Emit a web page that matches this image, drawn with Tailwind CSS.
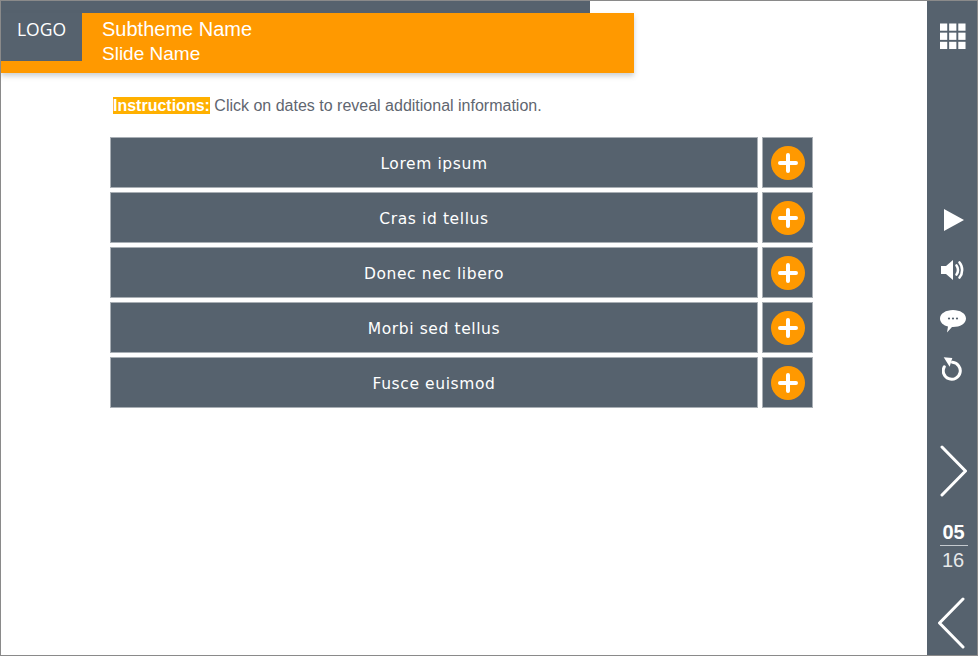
<!DOCTYPE html>
<html>
<head>
<meta charset="utf-8">
<script src="https://cdn.jsdelivr.net/npm/@tailwindcss/browser@4"></script>
</head>
<body class="m-0 bg-white">
<div class="flex h-[656px] w-[978px] overflow-hidden border border-[#8a8a8a] bg-white font-['Liberation_Sans',sans-serif]">
  <main class="flex min-w-0 flex-1 flex-col">
    <header class="flex w-[633px] flex-col">
      <div class="h-[12px] w-[589px] bg-[#56626e]"></div>
      <div class="flex h-[60px] bg-[#ff9900] shadow-[0_3px_5px_rgba(86,98,110,0.3)]">
        <div class="flex h-[48px] w-[81px] items-center justify-center self-start bg-[#56626e] pb-[15px] font-['Open_Sans',sans-serif] text-[17.5px] text-white">LOGO</div>
        <div class="flex flex-col pl-[20px] text-white">
          <div class="h-[29px] pt-[3px] text-[20px] leading-[26px]">Subtheme Name</div>
          <div class="text-[19px] leading-[24px]">Slide Name</div>
        </div>
      </div>
    </header>
    <p class="mt-[24px] ml-[112px] h-[18px] text-[16px] leading-[18px] text-[#5f6670]"><span class="bg-[#ffb000] font-bold text-white">Instructions:</span> Click on dates to reveal additional information.</p>
    <div class="mt-[22px] ml-[109px] flex flex-col gap-[4px]">
      <div class="flex gap-[4px]">
        <div class="flex h-[51px] w-[648px] items-center justify-center border border-[#a9afb5] bg-[#56626e] pt-[4px] font-['DejaVu_Sans',sans-serif] text-[15.5px] tracking-[0.6px] text-white">Lorem ipsum</div>
        <div class="flex h-[51px] w-[51px] items-center justify-center border border-[#a9afb5] bg-[#56626e]"><svg width="34" height="34" viewBox="0 0 34 34"><circle cx="17" cy="17" r="17" fill="#ff9900"/><path d="M17 9v16M9 17h16" stroke="#fff" stroke-width="4" stroke-linecap="round"/></svg></div>
      </div>
      <div class="flex gap-[4px]">
        <div class="flex h-[51px] w-[648px] items-center justify-center border border-[#a9afb5] bg-[#56626e] pt-[4px] font-['DejaVu_Sans',sans-serif] text-[15.5px] tracking-[0.6px] text-white">Cras id tellus</div>
        <div class="flex h-[51px] w-[51px] items-center justify-center border border-[#a9afb5] bg-[#56626e]"><svg width="34" height="34" viewBox="0 0 34 34"><circle cx="17" cy="17" r="17" fill="#ff9900"/><path d="M17 9v16M9 17h16" stroke="#fff" stroke-width="4" stroke-linecap="round"/></svg></div>
      </div>
      <div class="flex gap-[4px]">
        <div class="flex h-[51px] w-[648px] items-center justify-center border border-[#a9afb5] bg-[#56626e] pt-[4px] font-['DejaVu_Sans',sans-serif] text-[15.5px] tracking-[0.6px] text-white">Donec nec libero</div>
        <div class="flex h-[51px] w-[51px] items-center justify-center border border-[#a9afb5] bg-[#56626e]"><svg width="34" height="34" viewBox="0 0 34 34"><circle cx="17" cy="17" r="17" fill="#ff9900"/><path d="M17 9v16M9 17h16" stroke="#fff" stroke-width="4" stroke-linecap="round"/></svg></div>
      </div>
      <div class="flex gap-[4px]">
        <div class="flex h-[51px] w-[648px] items-center justify-center border border-[#a9afb5] bg-[#56626e] pt-[4px] font-['DejaVu_Sans',sans-serif] text-[15.5px] tracking-[0.6px] text-white">Morbi sed tellus</div>
        <div class="flex h-[51px] w-[51px] items-center justify-center border border-[#a9afb5] bg-[#56626e]"><svg width="34" height="34" viewBox="0 0 34 34"><circle cx="17" cy="17" r="17" fill="#ff9900"/><path d="M17 9v16M9 17h16" stroke="#fff" stroke-width="4" stroke-linecap="round"/></svg></div>
      </div>
      <div class="flex gap-[4px]">
        <div class="flex h-[51px] w-[648px] items-center justify-center border border-[#a9afb5] bg-[#56626e] pt-[4px] font-['DejaVu_Sans',sans-serif] text-[15.5px] tracking-[0.6px] text-white">Fusce euismod</div>
        <div class="flex h-[51px] w-[51px] items-center justify-center border border-[#a9afb5] bg-[#56626e]"><svg width="34" height="34" viewBox="0 0 34 34"><circle cx="17" cy="17" r="17" fill="#ff9900"/><path d="M17 9v16M9 17h16" stroke="#fff" stroke-width="4" stroke-linecap="round"/></svg></div>
      </div>
    </div>
  </main>
  <aside class="flex w-[50px] shrink-0 flex-col items-center bg-[#56626e] pl-[2px] text-white">
    <svg class="mt-[22px] shrink-0" width="26" height="27" viewBox="0 0 27 27" fill="#fff">
      <rect x="0" y="0" width="7.5" height="7.500"/><rect x="9.500" y="0" width="7.500" height="7.500"/><rect x="19" y="0" width="7.500" height="7.500"/>
      <rect x="0" y="9.500" width="7.500" height="7.500"/><rect x="9.500" y="9.500" width="7.500" height="7.500"/><rect x="19" y="9.500" width="7.500" height="7.500"/>
      <rect x="0" y="19" width="7.500" height="7.500"/><rect x="9.500" y="19" width="7.500" height="7.500"/><rect x="19" y="19" width="7.500" height="7.500"/>
    </svg>
    <svg class="mt-[159px] ml-[2px] shrink-0" width="20" height="22" viewBox="0 0 20 22"><path d="M0 0L20 11L0 22Z" fill="#fff"/></svg>
    <svg class="mt-[28px] shrink-0" width="24" height="22" viewBox="0 0 24 22"><path d="M0 7h5L12 1v20L5 15H0Z" fill="#fff"/><path d="M15.500 6.500c2 2.500 2 6.500 0 9M18.500 3.500c3.500 4 3.500 11 0 15" fill="none" stroke="#fff" stroke-width="2.600" stroke-linecap="round"/></svg>
    <svg class="mt-[29px] shrink-0" width="26" height="23" viewBox="0 0 26 23"><path d="M13 0C20 0 26 3.500 26 8.500S20 17 13 17H12L7 22.500L8 16.500C3.500 15.500 0 12.500 0 8.500C0 3.500 6 0 13 0Z" fill="#fff"/><circle cx="9" cy="8.500" r="1.100" fill="#56626e"/><circle cx="13" cy="8.500" r="1.100" fill="#56626e"/><circle cx="17" cy="8.500" r="1.100" fill="#56626e"/></svg>
    <svg class="mt-[24px] shrink-0" width="22" height="25" viewBox="0 0 22 25"><path d="M10.500 5.300A8.500 8.500 0 1 1 2.300 9.700" fill="none" stroke="#fff" stroke-width="3" stroke-linecap="round"/><path d="M1.700 0.300L10.300 1L7.700 9.700Z" fill="#fff"/></svg>
    <svg class="mt-[63px] ml-[1px] shrink-0" width="28" height="52" viewBox="0 0 28 52"><path d="M2 2L25.500 26L2 50" fill="none" stroke="#fff" stroke-width="3" stroke-linecap="round" stroke-linejoin="round"/></svg>
    <div class="mt-[23px] ml-[1px] w-[28px] border-b border-[#c5cacf] text-center text-[20px] leading-[25px] font-bold">05</div>
    <div class="mt-[2px] text-center text-[20px] leading-[24px] font-light text-[#e6e8ea]">16</div>
    <svg class="mt-[25px] mr-[5px] shrink-0" width="28" height="52" viewBox="0 0 28 52"><path d="M26 2L2.500 26L26 50" fill="none" stroke="#fff" stroke-width="3" stroke-linecap="round" stroke-linejoin="round"/></svg>
  </aside>
</div>
</body>
</html>
